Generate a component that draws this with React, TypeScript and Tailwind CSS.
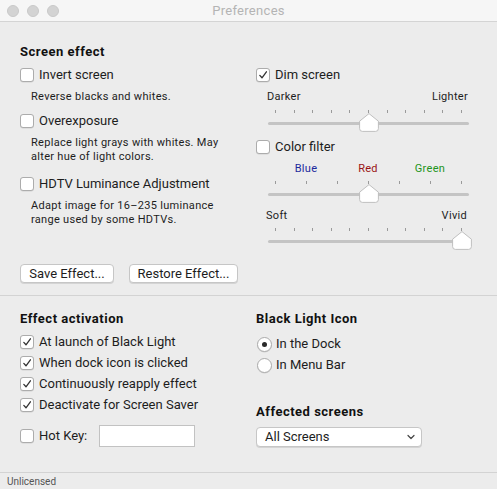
import React from "react";

const font = "font-['Roboto','Liberation_Sans',sans-serif]";

function CheckBox({ checked }: { checked?: boolean }) {
  return (
    <div className="w-[14px] h-[14px] shrink-0 rounded-[3px] border border-[#acacac] bg-white flex items-center justify-center shadow-[0_0.5px_0.5px_rgba(0,0,0,0.12)]">
      {checked && (
        <svg width="10" height="10" viewBox="0 0 10 10">
          <path d="M1.8 5.4 L4 7.8 L8.4 1.8" fill="none" stroke="#333" strokeWidth="1.3" strokeLinecap="round" strokeLinejoin="round" />
        </svg>
      )}
    </div>
  );
}

function CheckRow({ label, checked, className = "" }: { label: string; checked?: boolean; className?: string }) {
  return (
    <div className={`flex items-center h-[18px] ${className}`}>
      <CheckBox checked={checked} />
      <span className="ml-[5px] text-[13px] leading-[18px] text-[#1d1d1d]">{label}</span>
    </div>
  );
}

function Radio({ label, selected, className = "" }: { label: string; selected?: boolean; className?: string }) {
  return (
    <div className={`flex items-center h-[18px] ${className}`}>
      <div className="ml-[1px] w-[15px] h-[15px] shrink-0 rounded-full border border-[#acacac] bg-white flex items-center justify-center shadow-[0_0.5px_0.5px_rgba(0,0,0,0.12)]">
        {selected && <div className="w-[5px] h-[5px] rounded-full bg-[#2a2a2a]" />}
      </div>
      <span className="ml-[4px] text-[13px] leading-[18px] text-[#1d1d1d]">{label}</span>
    </div>
  );
}

function Slider({ ticks, index, className = "" }: { ticks: number; index: number; className?: string }) {
  const span = 186;
  const left = 7 + (index * span) / (ticks - 1) + 0.5 - 10;
  return (
    <div className={`relative ml-[12px] w-[201px] h-[22px] ${className}`}>
      <div className="flex justify-between px-[7px] h-[3px]">
        {Array.from({ length: ticks }).map((_, i) => (
          <div key={i} className="w-px h-[3px] bg-[#9a9a9a]" />
        ))}
      </div>
      <div className="mt-[9px] h-[3px] rounded-full bg-[#c4c4c4]" />
      <svg className="absolute top-[3px]" style={{ left }} width="20" height="19" viewBox="0 0 20 19">
        <path
          d="M10 0.6 L19.4 8.2 V15.5 Q19.4 18.4 16.6 18.4 H3.4 Q0.6 18.4 0.6 15.5 V8.2 Z"
          fill="#ffffff"
          stroke="#b9b9b9"
          strokeWidth="0.9"
        />
      </svg>
    </div>
  );
}

function Button({ label, w }: { label: string; w: string }) {
  return (
    <div className={`${w} h-[19px] rounded-[4px] border border-[#c6c6c6] bg-white flex items-center justify-center text-[13px] text-[#1d1d1d] shadow-[0_1px_0.5px_rgba(0,0,0,0.1)]`}>
      {label}
    </div>
  );
}

const heading = "text-[13px] font-bold leading-[16px] text-[#111] tracking-[0.5px]";
const desc = "text-[11px] leading-[14px] text-[#1d1d1d] tracking-[0.3px]";

export default function App() {
  return (
    <div className={`w-[497px] h-[489px] bg-[#ececec] flex flex-col overflow-hidden ${font}`}>
      {/* Title bar */}
      <div className="relative h-[22px] shrink-0 bg-[#f6f6f6] border-b border-[#d4d4d4] flex items-center justify-center">
        <div className="absolute left-[7px] top-[5px] flex gap-[8px]">
          <div className="w-[12px] h-[12px] rounded-full bg-[#d3d3d3] border border-[#c9c9c9]" />
          <div className="w-[12px] h-[12px] rounded-full bg-[#d3d3d3] border border-[#c9c9c9]" />
          <div className="w-[12px] h-[12px] rounded-full bg-[#d3d3d3] border border-[#c9c9c9]" />
        </div>
        <span className="text-[13px] text-[#b4b4b4] tracking-[0.3px]">Preferences</span>
      </div>

      {/* Top section */}
      <div className="h-[274px] shrink-0 flex pt-[22px] border-b border-[#d3d3d3]">
        <div className="w-[256px] pl-[20px] flex flex-col">
          <div className={heading}>Screen effect</div>
          <CheckRow className="mt-[6px]" label="Invert screen" />
          <div className={`mt-[6px] ml-[11px] ${desc}`}>Reverse blacks and whites.</div>
          <CheckRow className="mt-[8px]" label="Overexposure" />
          <div className={`mt-[6px] ml-[11px] ${desc}`}>
            Replace light grays with whites. May
            <br />
            alter hue of light colors.
          </div>
          <CheckRow className="mt-[11px]" label="HDTV Luminance Adjustment" />
          <div className={`mt-[6px] ml-[11px] ${desc}`}>
            Adapt image for 16–235 luminance
            <br />
            range used by some HDTVs.
          </div>
          <div className="mt-[37px] flex gap-[15px]">
            <Button label="Save Effect..." w="w-[94px]" />
            <Button label="Restore Effect..." w="w-[109px]" />
          </div>
        </div>
        <div className="w-[213px] pt-[22px] flex flex-col">
          <CheckRow label="Dim screen" checked />
          <div className={`mt-[6px] flex justify-between pl-[11px] pr-[1px] ${desc}`}>
            <span>Darker</span>
            <span>Lighter</span>
          </div>
          <Slider className="mt-[6px]" ticks={11} index={5} />
          <CheckRow className="mt-[6px]" label="Color filter" />
          <div className="mt-[6px] flex pl-[19px] text-[11px] leading-[14px] tracking-[0.3px]">
            <span className="w-[62px] text-center text-[#1c2a9c]">Blue</span>
            <span className="w-[62px] text-center text-[#9a1414]">Red</span>
            <span className="w-[62px] text-center text-[#1f9420]">Green</span>
          </div>
          <Slider className="mt-[5px]" ticks={7} index={3} />
          <div className={`mt-[6px] flex justify-between pl-[10px] pr-[2px] ${desc}`}>
            <span>Soft</span>
            <span>Vivid</span>
          </div>
          <Slider className="mt-[5px]" ticks={11} index={10} />
        </div>
      </div>

      {/* Bottom section */}
      <div className="h-[177px] shrink-0 flex pt-[15px] border-b border-[#d3d3d3]">
        <div className="w-[256px] pl-[20px] flex flex-col">
          <div className={heading}>Effect activation</div>
          <div className="mt-[6px] flex flex-col gap-[3px]">
            <CheckRow label="At launch of Black Light" checked />
            <CheckRow label="When dock icon is clicked" checked />
            <CheckRow label="Continuously reapply effect" checked />
            <CheckRow label="Deactivate for Screen Saver" checked />
          </div>
          <div className="mt-[11px] flex items-center h-[22px]">
            <CheckBox />
            <span className="ml-[5px] text-[13px] text-[#1d1d1d]">Hot Key:</span>
            <div className="ml-[12px] w-[96px] h-[22px] bg-white border border-[#c2c2c2]" />
          </div>
        </div>
        <div className="w-[213px] flex flex-col">
          <div className={heading}>Black Light Icon</div>
          <Radio className="mt-[8px]" label="In the Dock" selected />
          <Radio className="mt-[3px]" label="In Menu Bar" />
          <div className={`mt-[30px] ${heading}`}>Affected screens</div>
          <div className="mt-[7px] w-[166px] h-[20px] rounded-[4px] border border-[#c6c6c6] bg-white flex items-center justify-between pl-[8px] pr-[6px] shadow-[0_1px_0.5px_rgba(0,0,0,0.1)]">
            <span className="text-[13px] text-[#1d1d1d]">All Screens</span>
            <svg width="8" height="6" viewBox="0 0 8 6">
              <path d="M1 1.5 L4 4.5 L7 1.5" fill="none" stroke="#444" strokeWidth="1.2" strokeLinecap="round" strokeLinejoin="round" />
            </svg>
          </div>
        </div>
      </div>

      {/* Footer */}
      <div className="flex-1 flex items-center pl-[7px] text-[10px] text-[#555]">Unlicensed</div>
    </div>
  );
}
